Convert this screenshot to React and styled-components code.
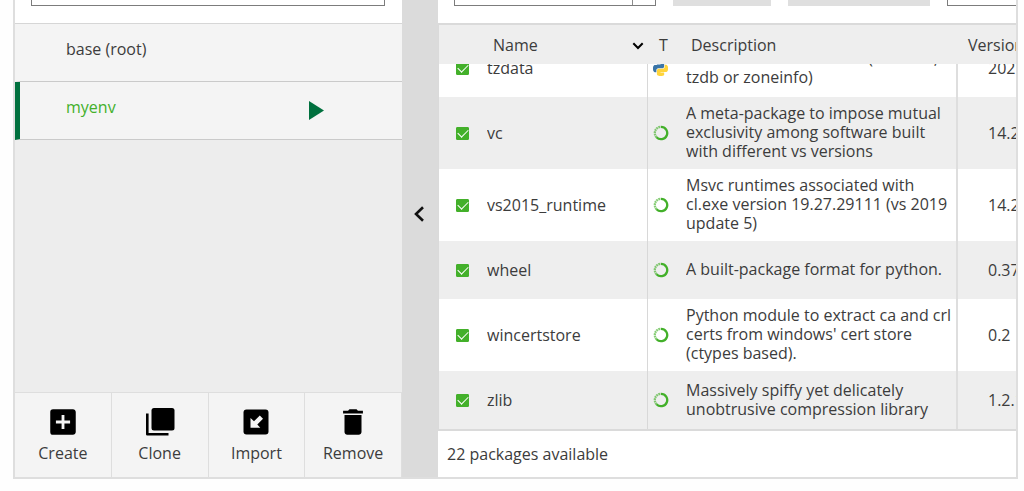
import { useState } from "react";
import styled, { createGlobalStyle } from "styled-components";
import { MdAddBox, MdDelete } from "react-icons/md";

const line = "#dedede";
const green = "#43b02a";
const darkGreen = "#00703e";

const GlobalStyle = createGlobalStyle`
* {
    box-sizing: border-box;
}
body {
    margin: 0;
    background-color: #fefefe;
    color: #3c3c3c;
    font-family: "Open Sans", "Noto Sans", sans-serif;
    font-size: 16px;
    font-weight: 400;
    line-height: 19px;
}
button, input, select {
    font: inherit;
    color: inherit;
}
`

const Page = styled.div`
height: 100vh;
padding: 0 6px 12px 13px;
`

const Frame = styled.main`
display: flex;
height: 100%;
border: 2px solid ${line};
border-top: none;
overflow: hidden;
`

const Sidebar = styled.section`
display: flex;
flex-direction: column;
flex: 0 0 387px;
background-color: #ededed;
`

const TopBar = styled.div`
display: flex;
align-items: flex-end;
gap: 17px;
height: 23px;
flex-shrink: 0;
padding: 0 17px 17px 16px;
background-color: #fff;
overflow: hidden;
`

const SearchInput = styled.input`
flex: 1 0 100px;
height: 36px;
padding: 0 8px;
border: 1px solid #7c7c7c;
background-color: #fff;
`

const FilterSelect = styled.select`
flex: 0 0 202px;
height: 36px;
appearance: none;
border: 1px solid #7c7c7c;
border-radius: 0;
background: linear-gradient(to left, #fff 22px, #8c8c8c 22px, #8c8c8c 23px, #fff 23px);
`

const BarButton = styled.button`
flex: 0 0 ${(props) => props.$width};
height: 36px;
border: none;
background-color: #dfdfdf;
`

const EnvList = styled.ul`
flex: 1;
margin: 0;
padding: 0;
border-top: 1px solid #d6d6d6;
list-style: none;
`

const EnvRow = styled.li`
display: flex;
align-items: center;
height: 58px;
padding-right: 78px;
border-bottom: 1px solid #cacaca;
border-left: 5px solid ${(props) => (props.$active ? darkGreen : "#f4f4f4")};
background-color: #f4f4f4;
`

const EnvName = styled.button`
flex: 1;
padding: 0 0 6px 46px;
border: none;
background: none;
text-align: left;
color: ${(props) => (props.$active ? green : "inherit")};
`

const PlayButton = styled.button`
display: flex;
padding: 0;
border: none;
background: none;
color: ${darkGreen};
`

const Actions = styled.div`
display: grid;
grid-template-columns: repeat(4, 1fr);
border-top: 1px solid ${line};
`

const Action = styled.button`
display: flex;
flex-direction: column;
align-items: center;
gap: 5px;
height: 84px;
padding: 12px 0;
border: none;
border-right: 1px solid ${line};
background-color: #f4f4f4;

svg {
    color: #000;
}
`

const Splitter = styled.button`
display: flex;
align-items: center;
justify-content: center;
flex: 0 0 36px;
padding: 0 2px 50px 0;
border: none;
background-color: #dbdbdb;
`

const Packages = styled.section`
display: flex;
flex-direction: column;
flex: 1;
min-width: 0;
background-color: #fff;
`

const Table = styled.table`
display: flex;
flex-direction: column;
flex: 1;
min-height: 0;
border: 2px solid #dadada;
border-width: 2px 0 2px 1px;
`

const Head = styled.thead`
display: block;
background-color: #eee;
`

const Body = styled.tbody`
display: flex;
flex-direction: column;
justify-content: flex-end;
flex: 1;
min-height: 0;
overflow: hidden;
`

const Row = styled.tr`
display: grid;
grid-template-columns: 48px 161px 38px 1fr 58px;
flex-shrink: 0;
background-color: ${(props) => (props.$striped ? "#eee" : "#fff")};
`

const HeadCell = styled.th`
display: flex;
align-items: center;
justify-content: space-between;
height: 39px;
padding: 2px 4px 0 ${(props) => props.$indent || "0"};
font-weight: inherit;
white-space: nowrap;
overflow: hidden;
`

const Cell = styled.td`
display: flex;
align-items: center;
min-height: 58px;
padding: 0;
white-space: nowrap;
overflow: hidden;
`

const CheckCell = styled(Cell)`
padding-left: 17px;
`

const NameCell = styled(Cell)`
border-right: 1px solid #d8d8d8;
`

const TypeCell = styled(Cell)`
padding-left: 5px;
`

const DescriptionCell = styled(Cell)`
padding: 7px 4px 8px 0;
border-right: 2px solid ${line};
white-space: normal;
`

const VersionCell = styled(Cell)`
padding-left: 30px;
`

const Check = styled.input`
display: grid;
place-content: center;
width: 13px;
height: 13px;
margin: 0;
appearance: none;
border: 1px solid ${green};
border-radius: 1px;

&:checked {
    background-color: ${green};
}
&:checked::after {
    content: "";
    width: 9px;
    height: 5px;
    margin-bottom: 2px;
    border: solid #fff;
    border-width: 0 0 1px 1px;
    transform: rotate(-45deg);
}
`

const Status = styled.footer`
display: flex;
align-items: center;
height: 46px;
padding: 0 9px;
`

const packages = [
    { name: "tzdata", type: "python", description: "The time zone database (called tz, tzdb or zoneinfo)", version: "2021e" },
    { name: "vc", type: "conda", description: "A meta-package to impose mutual exclusivity among software built with different vs versions", version: "14.2" },
    { name: "vs2015_runtime", type: "conda", description: "Msvc runtimes associated with cl.exe version 19.27.29111 (vs 2019 update 5)", version: "14.27" },
    { name: "wheel", type: "conda", description: "A built-package format for python.", version: "0.37.0" },
    { name: "wincertstore", type: "conda", description: "Python module to extract ca and crl certs from windows' cert store (ctypes based).", version: "0.2" },
    { name: "zlib", type: "conda", description: "Massively spiffy yet delicately unobtrusive compression library", version: "1.2.11" },
];

function CondaIcon(){
    return (
        <svg width="16" height="16" viewBox="0 0 32 32" fill="none" stroke={green} strokeWidth="4.6">
            <path d="M16 3.6A12.4 12.4 0 1 1 7 24.5" />
            <path d="M7 24.5A12.4 12.4 0 0 1 16 3.6" strokeDasharray="3.4 1.2" opacity="0.65" />
        </svg>
    )
}

function PythonIcon(){
    return (
        <svg width="15" height="15" viewBox="0 0 24 24">
            <path fill="#3a75a8" d="M14.25.18l.9.2.73.26.59.3.45.32.34.34.25.34.16.33.1.3.04.26.02.2-.01.13V8.5l-.05.63-.13.55-.21.46-.26.38-.3.31-.33.25-.35.19-.35.14-.33.1-.3.07-.26.04-.21.02H8.77l-.69.05-.59.14-.5.22-.41.27-.33.32-.27.35-.2.36-.15.37-.1.35-.07.32-.04.27-.02.21v3.06H3.17l-.21-.03-.28-.07-.32-.12-.35-.18-.36-.26-.36-.36-.35-.46-.32-.59-.28-.73-.21-.88-.14-1.05-.05-1.23.06-1.22.16-1.04.24-.87.32-.71.36-.57.4-.44.42-.33.42-.24.4-.16.36-.1.32-.05.24-.01h.16l.06.01h8.16v-.83H6.18l-.01-2.75-.02-.37.05-.34.11-.31.17-.28.25-.26.31-.23.38-.2.44-.18.51-.15.58-.12.64-.1.71-.06.77-.04.84-.02 1.27.05z" />
            <path fill="#ffd43b" d="M21.1 6.11l.28.06.32.12.35.18.36.27.36.35.35.47.32.59.28.73.21.88.14 1.04.05 1.23-.06 1.23-.16 1.04-.24.86-.32.71-.36.57-.4.45-.42.33-.42.24-.4.16-.36.09-.32.05-.24.02-.16-.01h-8.22v.82h5.84l.01 2.76.02.36-.05.34-.11.31-.17.29-.25.25-.31.24-.38.2-.44.17-.51.15-.58.13-.64.09-.71.07-.77.04-.84.01-1.27-.04-1.07-.14-.9-.2-.73-.25-.59-.3-.45-.33-.34-.34-.25-.34-.16-.33-.1-.3-.04-.25-.02-.2.01-.13v-5.34l.05-.64.13-.54.21-.46.26-.38.3-.32.33-.24.35-.2.35-.14.33-.1.3-.06.26-.04.21-.02.13-.01h5.84l.69-.05.59-.14.5-.21.41-.28.33-.32.27-.35.2-.36.15-.36.1-.35.07-.32.04-.28.02-.21V6.07h2.09l.14.01z" />
        </svg>
    )
}

function CloneIcon(){
    return (
        <svg width="34" height="34" viewBox="0 0 34 34">
            <rect x="8.5" y="3" width="23" height="22.5" rx="2.5" fill="currentColor" />
            <path d="M4.3 8.5V29.2H25.5" fill="none" stroke="currentColor" strokeWidth="2.6" strokeLinejoin="round" />
        </svg>
    )
}

function ImportIcon(){
    return (
        <svg width="34" height="34" viewBox="0 0 34 34">
            <rect x="4.5" y="4.5" width="25" height="25" rx="3" fill="currentColor" />
            <path d="M11.5 13V22.7H21.3L18.3 19.6L24 13.8L20.8 10.4L15 16.2Z" fill="#f4f4f4" />
        </svg>
    )
}

function EnvironmentPanel(){
    const [active, setActive] = useState("myenv");

    return (
        <Sidebar>
            <TopBar>
                <SearchInput type="text" aria-label="Search environments" />
            </TopBar>
            <EnvList>
                {["base (root)", "myenv"].map((env) => (
                    <EnvRow key={env} $active={env === active}>
                        <EnvName $active={env === active} onClick={() => setActive(env)}>{env}</EnvName>
                        {env === active ? (
                            <PlayButton aria-label={"Open " + env}>
                                <svg width="16" height="20" viewBox="0 0 16 20"><path d="M1 0V19L16 9.5Z" fill="currentColor" /></svg>
                            </PlayButton>
                        ) : ""}
                    </EnvRow>
                ))}
            </EnvList>
            <Actions>
                <Action><MdAddBox size={34} />Create</Action>
                <Action><CloneIcon />Clone</Action>
                <Action><ImportIcon />Import</Action>
                <Action><MdDelete size={34} />Remove</Action>
            </Actions>
        </Sidebar>
    )
}

function PackageTable(){
    return (
        <Table>
            <Head>
                <Row $striped>
                    <HeadCell aria-label="Installed" />
                    <HeadCell $indent="6px">
                        Name
                        <svg width="12" height="8" viewBox="0 0 12 8" fill="none" stroke="#000" strokeWidth="2"><path d="M1.3 1.2L6 6L10.7 1.2" /></svg>
                    </HeadCell>
                    <HeadCell $indent="11px">T</HeadCell>
                    <HeadCell $indent="5px">Description</HeadCell>
                    <HeadCell $indent="10px">Version</HeadCell>
                </Row>
            </Head>
            <Body>
                {packages.map((item, index) => (
                    <Row key={item.name} $striped={index % 2 === 1}>
                        <CheckCell><Check type="checkbox" defaultChecked aria-label={item.name} /></CheckCell>
                        <NameCell>{item.name}</NameCell>
                        <TypeCell>{item.type === "python" ? <PythonIcon /> : <CondaIcon />}</TypeCell>
                        <DescriptionCell>{item.description}</DescriptionCell>
                        <VersionCell>{item.version}</VersionCell>
                    </Row>
                ))}
            </Body>
        </Table>
    )
}

function App(){
    return (
        <Page>
            <GlobalStyle />
            <Frame>
                <EnvironmentPanel />
                <Splitter aria-label="Collapse environments">
                    <svg width="12" height="16" viewBox="0 0 12 16" fill="none" stroke="#111" strokeWidth="2.6"><path d="M10 1.2L3 8L10 14.8" /></svg>
                </Splitter>
                <Packages>
                    <TopBar>
                        <FilterSelect aria-label="Package filter" />
                        <BarButton $width="98px" aria-label="Channels" />
                        <BarButton $width="142px" aria-label="Update index" />
                        <SearchInput type="text" aria-label="Search packages" />
                    </TopBar>
                    <PackageTable />
                    <Status>{packages.length + 16} packages available</Status>
                </Packages>
            </Frame>
        </Page>
    )
}

export default App;
